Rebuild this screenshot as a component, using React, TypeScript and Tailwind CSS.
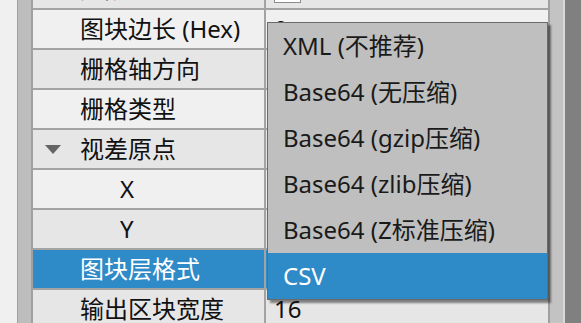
import React from "react";

type Row = {
  name: string;
  value?: React.ReactNode;
  depth?: number;
  expander?: boolean;
  selected?: boolean;
  shade: "light" | "dark";
};

// 被下拉菜单遮住的值不再渲染
const rows: Row[] = [
  {
    name: "无限",
    shade: "dark",
    value: <span className="block h-[27px] w-[27px] border border-[#8c8c8c] bg-white" />,
  },
  { name: "图块边长 (Hex)", shade: "light", value: "0" },
  { name: "栅格轴方向", shade: "dark" },
  { name: "栅格类型", shade: "light" },
  { name: "视差原点", shade: "dark", expander: true },
  { name: "X", shade: "light", depth: 1 },
  { name: "Y", shade: "dark", depth: 1 },
  { name: "图块层格式", shade: "light", selected: true },
  { name: "输出区块宽度", shade: "dark", value: "16" },
];

const formats = [
  "XML (不推荐)",
  "Base64 (无压缩)",
  "Base64 (gzip压缩)",
  "Base64 (zlib压缩)",
  "Base64 (Z标准压缩)",
  "CSV",
];

function Triangle() {
  return (
    <svg width="16" height="9" viewBox="0 0 16 9" aria-hidden="true">
      <path d="M0 0H16L8 9Z" fill="#646464" />
    </svg>
  );
}

function PropertyRow({ row }: { row: Row }) {
  const bg = row.shade === "dark" ? "bg-[#e6e6e6]" : "bg-[#f0f0f0]";
  return (
    <div className="flex h-[40px] shrink-0 border-b-2 border-[#a3a3a3]">
      <div
        className={`flex w-[233px] shrink-0 items-center border-r-2 border-[#a3a3a3] ${
          row.selected ? "bg-[#2f8ac8] text-white" : `${bg} text-[#111]`
        } ${row.expander ? "pl-[12px]" : row.depth ? "pl-[87px]" : "pl-[47px]"}`}
      >
        {row.expander && (
          <span className="mr-[19px] flex items-center">
            <Triangle />
          </span>
        )}
        <span className="leading-none">{row.name}</span>
      </div>
      <div
        className={`flex flex-1 items-center pl-[8px] ${
          row.selected ? "bg-[#2f8ac8] text-white" : `${bg} text-[#111]`
        }`}
      >
        {row.value && <span className="leading-none">{row.value}</span>}
      </div>
    </div>
  );
}

export default function App() {
  return (
    <div className="relative flex h-[323px] w-[581px] overflow-hidden bg-[#f0f0f0] font-['Noto_Sans','Noto_Sans_CJK_SC',sans-serif] text-[24px]">
      {/* 左侧边距和折叠栏 */}
      <div className="w-[17px] shrink-0 bg-[#f0f0f0]" />
      <div className="w-[16px] shrink-0 border-l border-r-2 border-[#a0a0a0] bg-[#bdbdbd]" />

      {/* 属性表 */}
      <div className="flex w-[517px] shrink-0 flex-col border-r-2 border-[#a0a0a0]">
        <div className="mt-[-30px] flex flex-col">
          {rows.map((r) => (
            <PropertyRow key={r.name + (r.depth ?? 0)} row={r} />
          ))}
        </div>
      </div>

      {/* 滚动条区域 */}
      <div className="w-[13px] shrink-0 bg-[#c3c3c3]" />
      <div className="w-[2px] shrink-0 bg-[#d8d8d8]" />
      <div className="flex-1 bg-[#808080]" />

      {/* 下拉菜单 */}
      <div className="absolute left-[267px] top-[22px] flex w-[281px] flex-col border border-[#6a6a6a] bg-[#bfbfbf] shadow-[3px_3px_2px_rgba(0,0,0,0.45)]">
        {formats.map((f) => (
          <div
            key={f}
            className={`flex h-[46px] items-center pl-[15px] leading-none ${
              f === "CSV" ? "bg-[#2f8ac8] text-white" : "text-[#1a1a1a]"
            }`}
          >
            {f}
          </div>
        ))}
      </div>
    </div>
  );
}
